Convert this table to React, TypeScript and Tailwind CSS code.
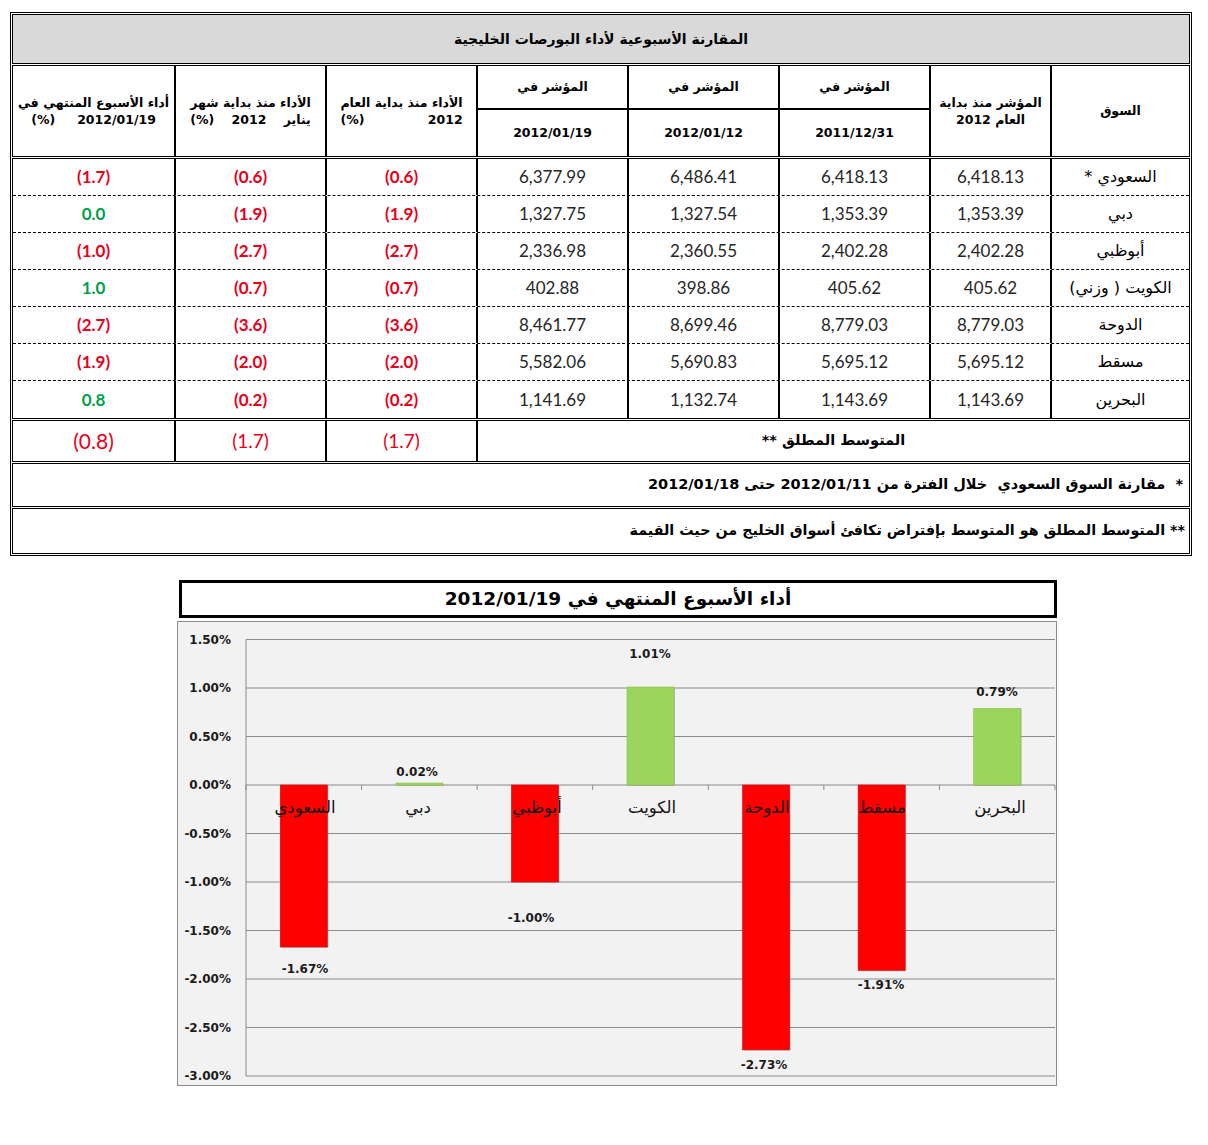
import React from 'react';

type Row = { name: string; vals: string[]; perf: string[] };

const rows: Row[] = [
  { name: 'السعودي *', vals: ['6,418.13', '6,418.13', '6,486.41', '6,377.99'], perf: ['(0.6)', '(0.6)', '(1.7)'] },
  { name: 'دبي', vals: ['1,353.39', '1,353.39', '1,327.54', '1,327.75'], perf: ['(1.9)', '(1.9)', '0.0'] },
  { name: 'أبوظبي', vals: ['2,402.28', '2,402.28', '2,360.55', '2,336.98'], perf: ['(2.7)', '(2.7)', '(1.0)'] },
  { name: 'الكويت ( وزني)', vals: ['405.62', '405.62', '398.86', '402.88'], perf: ['(0.7)', '(0.7)', '1.0'] },
  { name: 'الدوحة', vals: ['8,779.03', '8,779.03', '8,699.46', '8,461.77'], perf: ['(3.6)', '(3.6)', '(2.7)'] },
  { name: 'مسقط', vals: ['5,695.12', '5,695.12', '5,690.83', '5,582.06'], perf: ['(2.0)', '(2.0)', '(1.9)'] },
  { name: 'البحرين', vals: ['1,143.69', '1,143.69', '1,132.74', '1,141.69'], perf: ['(0.2)', '(0.2)', '0.8'] },
];

// chart data, left to right
const bars = [
  { name: 'السعودي', v: -1.67, label: '-1.67%', lx: 127, ly: 351, nx: 127 },
  { name: 'دبي', v: 0.02, label: '0.02%', lx: 239, ly: 154, nx: 240 },
  { name: 'أبوظبي', v: -1.0, label: '-1.00%', lx: 353, ly: 300, nx: 359 },
  { name: 'الكويت', v: 1.01, label: '1.01%', lx: 472, ly: 36, nx: 474 },
  { name: 'الدوحة', v: -2.73, label: '-2.73%', lx: 586, ly: 447, nx: 589 },
  { name: 'مسقط', v: -1.91, label: '-1.91%', lx: 703, ly: 367, nx: 704 },
  { name: 'البحرين', v: 0.79, label: '0.79%', lx: 819, ly: 74, nx: 822 },
];

const ticks = [1.5, 1, 0.5, 0, -0.5, -1, -1.5, -2, -2.5, -3];

const NUM = "font-['Lato','DejaVu_Sans',sans-serif]";

function PerfCell({ v, w, last }: { v: string; w: string; last?: boolean }) {
  const neg = v.startsWith('(');
  return (
    <div
      className={`${w} ${last ? '' : 'border-l-2 border-black'} ${NUM} flex items-center justify-center text-[17px] font-bold ${
        neg ? 'text-[#e8001a]' : 'text-[#00a04a]'
      }`}
    >
      {v}
    </div>
  );
}

function Table() {
  return (
    <div dir="rtl" className="ml-[10px] flex w-[1182px] flex-col gap-px border border-black p-px">
      <div className="flex h-[50px] items-center justify-center border border-black bg-[#d9d9d9] text-[14px] font-bold">
        المقارنة الأسبوعية لأداء البورصات الخليجية
      </div>

      {/* header */}
      <div className="flex h-[92px] border border-black text-[12.5px] font-bold">
        <div className="flex w-[139px] items-center justify-center border-l-2 border-black">السوق</div>
        <div className="flex w-[121px] flex-col items-center justify-center border-l-2 border-black leading-[17px]">
          <span>المؤشر منذ بداية</span>
          <span>العام 2012</span>
        </div>
        <div className="flex w-[453px] flex-col">
          <div className="flex h-[44px] border-b-2 border-black">
            {[0, 1, 2].map((i) => (
              <div key={i} className="flex w-[151px] items-center justify-center border-l-2 border-black">
                المؤشر في
              </div>
            ))}
          </div>
          <div className="flex flex-1">
            {['2011/12/31', '2012/01/12', '2012/01/19'].map((d) => (
              <div key={d} className="flex w-[151px] items-center justify-center border-l-2 border-black">
                {d}
              </div>
            ))}
          </div>
        </div>
        <div className="flex w-[151px] items-center justify-center border-l-2 border-black">
          <div className="flex flex-col leading-[17px]">
            <span>الأداء منذ بداية العام</span>
            <span className="flex justify-between">
              <span>2012</span>
              <span>(%)</span>
            </span>
          </div>
        </div>
        <div className="flex w-[151px] items-center justify-center border-l-2 border-black">
          <div className="flex flex-col leading-[17px]">
            <span>الأداء منذ بداية شهر</span>
            <span className="flex justify-between">
              <span>يناير</span>
              <span>2012</span>
              <span>(%)</span>
            </span>
          </div>
        </div>
        <div className="flex w-[161px] items-center justify-center">
          <div className="flex flex-col leading-[17px]">
            <span>أداء الأسبوع المنتهي في</span>
            <span className="flex justify-center gap-[22px]">
              <span>2012/01/19</span>
              <span>(%)</span>
            </span>
          </div>
        </div>
      </div>

      {/* data rows */}
      <div className="border border-black">
        {rows.map((r, idx) => (
          <div
            key={r.name}
            className={`flex h-[37px] ${idx < rows.length - 1 ? 'border-b border-dashed border-black' : ''}`}
          >
            <div className="flex w-[139px] items-center justify-center border-l-2 border-black text-[16px]">{r.name}</div>
            {r.vals.map((v, i) => (
              <div
                key={i}
                className={`flex ${i === 0 ? 'w-[121px]' : 'w-[151px]'} items-center justify-center border-l-2 border-black ${NUM} text-[17px] text-[#262626]`}
              >
                {v}
              </div>
            ))}
            <PerfCell v={r.perf[0]} w="w-[151px]" />
            <PerfCell v={r.perf[1]} w="w-[151px]" />
            <PerfCell v={r.perf[2]} w="w-[161px]" last />
          </div>
        ))}
      </div>

      {/* average */}
      <div className="flex h-[42px] border border-black">
        <div className="flex w-[713px] items-center justify-center border-l-2 border-black text-[14.5px] font-bold">
          المتوسط المطلق **
        </div>
        {['(1.7)', '(1.7)', '(0.8)'].map((v, i) => (
          <div
            key={i}
            className={`flex ${i === 2 ? 'w-[161px] text-[21px]' : 'w-[151px] border-l-2 border-black text-[19px]'} items-center justify-center ${NUM} text-[#e8001a]`}
          >
            {v}
          </div>
        ))}
      </div>

      <div className="flex h-[44px] items-center border border-black pr-[6px] text-[14.5px] font-bold">
        *&nbsp; مقارنة السوق السعودي&nbsp; خلال الفترة من 2012/01/11 حتى 2012/01/18
      </div>
      <div className="flex h-[46px] items-center border border-black pr-[4px] text-[14.3px] font-bold">
        ** المتوسط المطلق هو المتوسط بإفتراض تكافئ أسواق الخليج من حيث القيمة
      </div>
    </div>
  );
}

function Chart() {
  const zero = 163;
  const k = 97;
  const left = 68;
  const right = 877;
  const cw = (right - left) / 7;
  return (
    <div>
      <div
        dir="rtl"
        className="ml-[179px] mt-[24px] flex h-[38px] w-[878px] items-center justify-center border-[3px] border-black text-[18.5px] font-bold"
      >
        أداء الأسبوع المنتهي في 2012/01/19
      </div>
      <div className="ml-[177px] mt-[3px] h-[465px] w-[880px] border border-[#8c8c8c] bg-[#f2f2f2]">
        <svg width="878" height="463" className="block" fontFamily="'DejaVu Sans', sans-serif">
          {ticks.map((t) => {
            const y = zero - t * k;
            return (
              <g key={t}>
                <line x1={left} x2={right} y1={y} y2={y} stroke="#8a8a8a" strokeWidth="1" />
                <text x="53" y={y + 4} textAnchor="end" fontSize="12" fontWeight="bold" fill="#1a1a1a">
                  {t.toFixed(2)}%
                </text>
              </g>
            );
          })}
          <line x1={left} x2={left} y1={zero - 1.5 * k} y2={zero + 3 * k} stroke="#8a8a8a" />
          {Array.from({ length: 8 }).map((_, i) => (
            <line
              key={i}
              x1={left + i * cw}
              x2={left + i * cw}
              y1={zero}
              y2={zero + 5}
              stroke="#8a8a8a"
            />
          ))}
          {bars.map((b, i) => {
            const cx = left + cw * (i + 0.5);
            const h = Math.abs(b.v) * k;
            const y = b.v >= 0 ? zero - h : zero;
            const pos = b.v >= 0;
            return (
              <g key={b.name}>
                <rect x={cx - 22.5} y={y + 1} width="47" height={Math.max(h, 2)} fill="#9a9a9a" opacity="0.6" />
                <rect
                  x={cx - 23.5}
                  y={y}
                  width="47"
                  height={Math.max(h, 2)}
                  fill={pos ? '#9bd55b' : '#ff0000'}
                  stroke={pos ? '#88c348' : '#e00000'}
                  strokeWidth="0.6"
                />
              </g>
            );
          })}
          {bars.map((b) => (
            <g key={b.name + 't'}>
              <text x={b.nx} y="191" textAnchor="middle" fontSize="16.5" fill="#111">
                {b.name}
              </text>
              <text x={b.lx} y={b.ly} textAnchor="middle" fontSize="12" fontWeight="bold" fill="#1a1a1a">
                {b.label}
              </text>
            </g>
          ))}
        </svg>
      </div>
    </div>
  );
}

export default function App() {
  return (
    <div className="min-h-[1145px] w-[1208px] bg-white pt-[12px] font-['DejaVu_Sans',sans-serif] text-black">
      <Table />
      <Chart />
    </div>
  );
}
